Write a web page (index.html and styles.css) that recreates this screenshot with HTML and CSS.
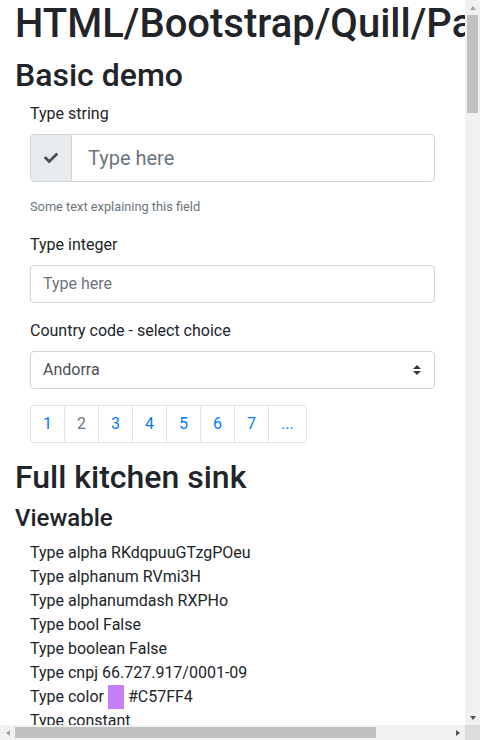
FILE: index.html
```html
<!DOCTYPE html>
<html lang="en">
<head>
<meta charset="utf-8">
<title>HTML/Bootstrap/Quill/Parsley</title>
<link rel="stylesheet" href="styles.css">
</head>
<body>
<div class="window">
<main class="viewport">
<div class="container">
  <h1 class="title">HTML/Bootstrap/Quill/Parsley</h1>

  <h2 class="h2">Basic demo</h2>
  <div class="block">
    <div class="form-group">
      <label class="label">Type string</label>
      <div class="input-group">
        <span class="ig-text">
          <svg class="check" viewBox="0 0 512 512" aria-hidden="true"><path d="M173.898 439.404l-166.4-166.4c-9.997-9.997-9.997-26.206 0-36.204l36.203-36.204c9.997-9.998 26.207-9.998 36.204 0L192 312.69 432.095 72.596c9.997-9.997 26.207-9.997 36.204 0l36.203 36.204c9.997 9.997 9.997 26.206 0 36.204l-294.4 294.401c-9.998 9.997-26.207 9.997-36.204-.001z"/></svg>
        </span>
        <input class="control control-lg" type="text" placeholder="Type here">
      </div>
      <small class="form-text">Some text explaining this field</small>
    </div>
    <div class="form-group">
      <label class="label">Type integer</label>
      <input class="control" type="text" placeholder="Type here">
    </div>
    <div class="form-group">
      <label class="label">Country code - select choice</label>
      <div class="control select">
        <span>Andorra</span>
        <svg class="arrows" viewBox="0 0 4 5" aria-hidden="true"><path d="M2 0L0 2h4zm0 5L0 3h4z"/></svg>
      </div>
    </div>
    <ul class="pagination">
      <li class="page-link first">1</li>
      <li class="page-link current">2</li>
      <li class="page-link">3</li>
      <li class="page-link">4</li>
      <li class="page-link">5</li>
      <li class="page-link">6</li>
      <li class="page-link">7</li>
      <li class="page-link last">...</li>
    </ul>
  </div>

  <h2 class="h2">Full kitchen sink</h2>
  <h4 class="h4">Viewable</h4>
  <ul class="view-list">
    <li>Type alpha RKdqpuuGTzgPOeu</li>
    <li>Type alphanum RVmi3H</li>
    <li>Type alphanumdash RXPHo</li>
    <li>Type bool False</li>
    <li>Type boolean False</li>
    <li>Type cnpj 66.727.917/0001-09</li>
    <li>Type color <span class="swatch"></span> #C57FF4</li>
    <li>Type constant</li>
    <li>Type cpf 417.205.638-52</li>
    <li>Type date 2019-03-14</li>
  </ul>
</div>
</main>

<div class="vscroll">
  <span class="sb-btn"><span class="tri up light"></span></span>
  <span class="v-track"><span class="v-thumb"></span></span>
  <span class="sb-btn"><span class="tri down"></span></span>
</div>
<div class="hscroll">
  <span class="sb-btn"><span class="tri left light"></span></span>
  <span class="h-track"><span class="h-thumb"></span></span>
  <span class="sb-btn"><span class="tri right"></span></span>
</div>
<div class="corner"></div>
</div>
</body>
</html>
```

FILE: styles.css
```css
* {
  box-sizing: border-box;
}

html,
body {
  margin: 0;
  height: 100%;
  overflow: hidden;
}

body {
  font-family: Roboto, "Noto Sans", "Liberation Sans", sans-serif;
  font-size: 16px;
  line-height: 1.5;
  color: #212529;
  background: #fff;
}

.window {
  display: grid;
  grid-template-columns: 1fr 15px;
  grid-template-rows: 1fr 15px;
  width: 480px;
  height: 740px;
}

.viewport {
  overflow: hidden;
  min-width: 0;
  min-height: 0;
}

.container {
  padding: 0 15px;
}

.title,
.h2,
.h4 {
  margin: 0 0 8px;
  font-weight: 500;
  line-height: 1.2;
}

.title {
  font-size: 40px;
  white-space: nowrap;
}

.h2 {
  font-size: 32px;
}

.h4 {
  font-size: 24px;
}

.block {
  padding: 0 15px;
}

.form-group {
  margin-bottom: 16px;
}

.label {
  display: block;
  margin-bottom: 8px;
}

.input-group {
  display: flex;
  height: 48px;
}

.ig-text {
  flex: 0 0 41px;
  display: flex;
  align-items: center;
  justify-content: center;
  background: #e9ecef;
  border: 1px solid #ced4da;
  border-right: 0;
  border-radius: 4.8px 0 0 4.8px;
}

.check {
  width: 14px;
  height: 14px;
  fill: #495057;
}

.control {
  display: block;
  width: 100%;
  height: 38px;
  padding: 6px 12px;
  font-family: inherit;
  font-size: 16px;
  line-height: 24px;
  color: #495057;
  background: #fff;
  border: 1px solid #ced4da;
  border-radius: 4px;
  margin: 0;
}

.control::placeholder {
  color: #6c757d;
  opacity: 1;
}

.control-lg {
  flex: 1;
  height: 48px;
  padding: 8px 16px;
  font-size: 20px;
  line-height: 30px;
  border-radius: 0 4.8px 4.8px 0;
}

.select {
  display: flex;
  align-items: center;
  justify-content: space-between;
}

.arrows {
  width: 8px;
  height: 10px;
  fill: #343a40;
  margin-right: 1px;
}

.form-text {
  display: block;
  margin-top: 15px;
  font-size: 12.8px;
  line-height: 19.2px;
  color: #6c757d;
}

.pagination {
  display: flex;
  list-style: none;
  margin: 0 0 15px;
  padding: 0;
}

.page-link {
  padding: 8px 12px;
  line-height: 20px;
  color: #007bff;
  border: 1px solid #dee2e6;
  margin-left: -1px;
  background: #fff;
}

.page-link.first {
  margin-left: 0;
  border-radius: 4px 0 0 4px;
}

.page-link.last {
  border-radius: 0 4px 4px 0;
}

.page-link.current {
  color: #6c757d;
}

.view-list {
  list-style: none;
  margin: 0 0 16px;
  padding: 0 15px;
}

.swatch {
  display: inline-block;
  width: 16px;
  height: 24px;
  vertical-align: top;
  background: #c57ff4;
}

/* scrollbars */
.vscroll,
.hscroll {
  display: flex;
  background: #f1f1f1;
}

.vscroll {
  flex-direction: column;
}

.sb-btn {
  flex: 0 0 15px;
  width: 15px;
  height: 15px;
  display: flex;
  align-items: center;
  justify-content: center;
}

.v-track {
  flex: 1;
  display: flex;
  flex-direction: column;
}

.v-thumb {
  height: 98px;
  margin: 0 2px;
  background: #c1c1c1;
}

.h-track {
  flex: 1;
  display: flex;
}

.h-thumb {
  width: 361px;
  margin: 2px 0;
  background: #c1c1c1;
}

.corner {
  background: #dcdcdc;
}

.tri {
  width: 0;
  height: 0;
  border-style: solid;
  border-color: transparent;
}

.tri.up {
  border-width: 0 3.5px 4px;
  border-bottom-color: #505050;
}

.tri.down {
  border-width: 4px 3.5px 0;
  border-top-color: #505050;
}

.tri.left {
  border-width: 3.5px 4px 3.5px 0;
  border-right-color: #505050;
}

.tri.right {
  border-width: 3.5px 0 3.5px 4px;
  border-left-color: #505050;
}

.tri.up.light {
  border-bottom-color: #a3a3a3;
}

.tri.left.light {
  border-right-color: #a3a3a3;
}
```
